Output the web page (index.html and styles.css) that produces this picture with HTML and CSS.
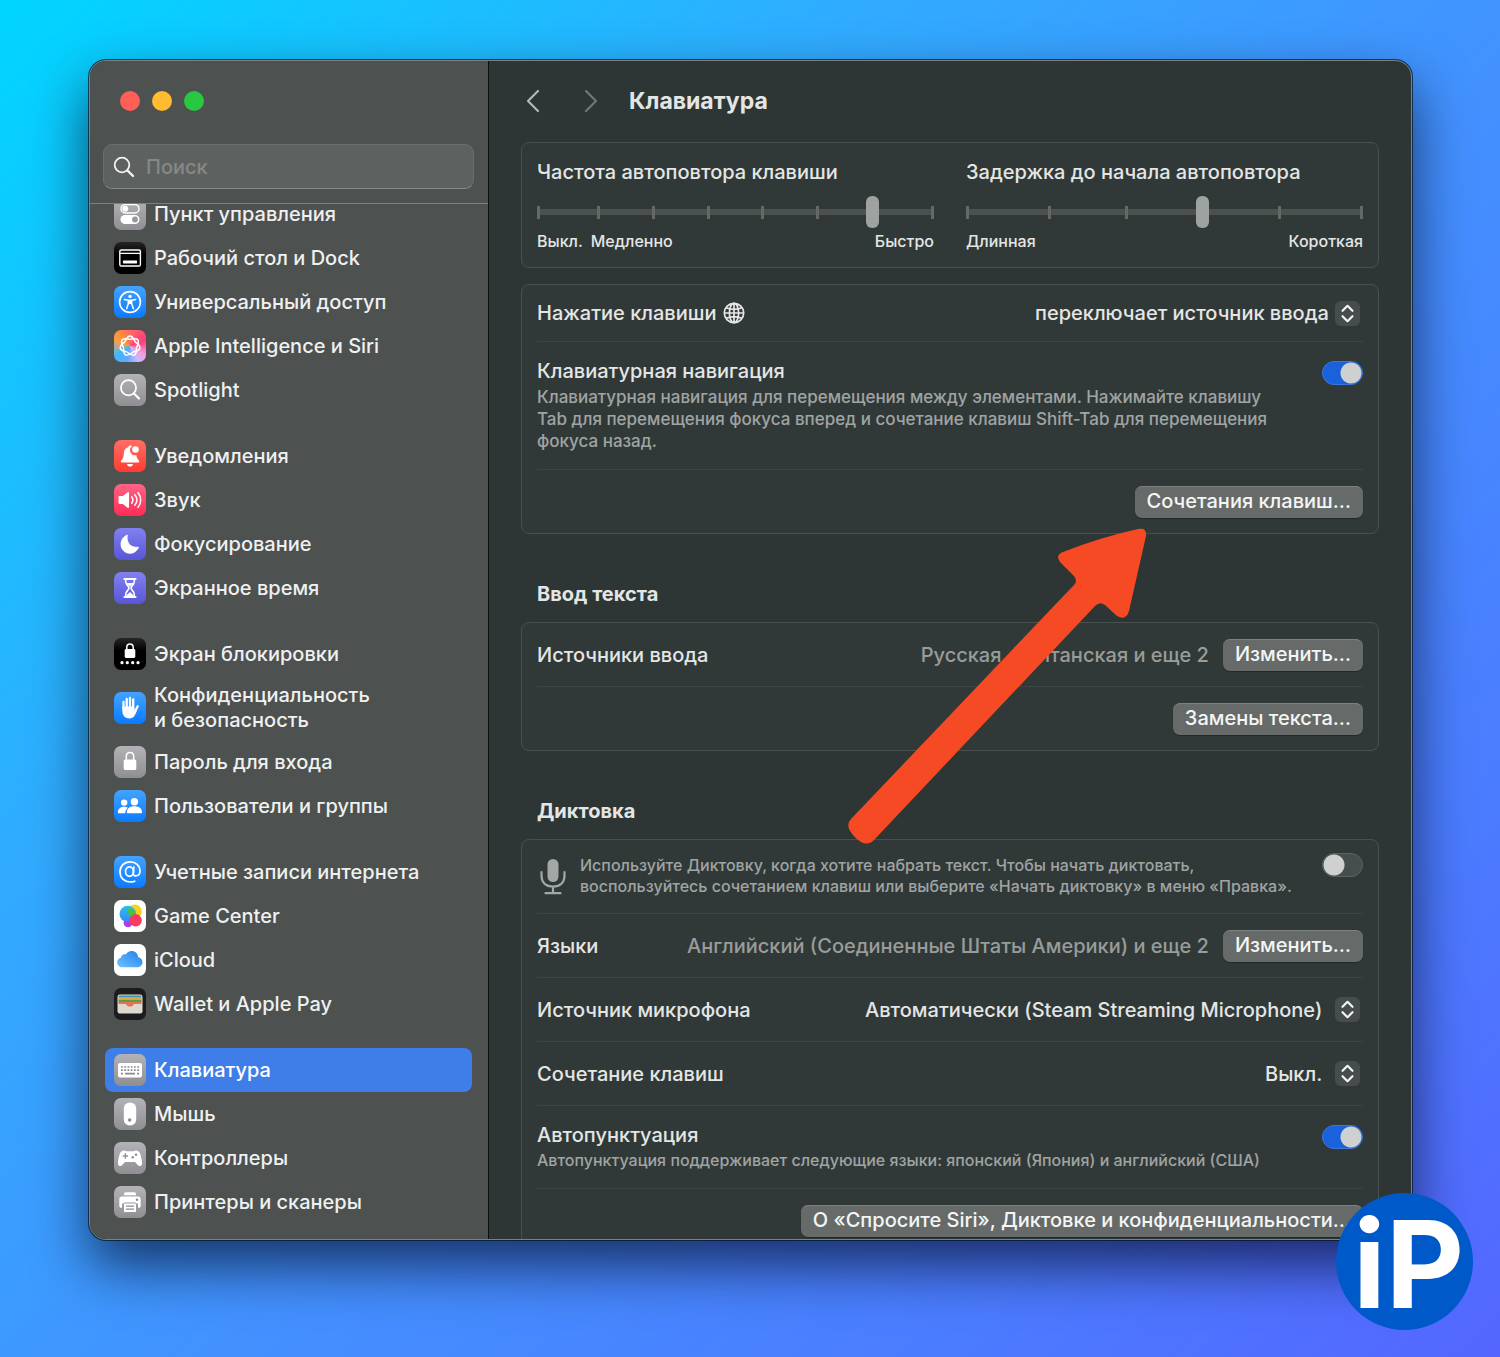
FILE: index.html
```html
<!DOCTYPE html>
<html lang="ru">
<head>
  <meta charset="UTF-8" />
  <meta name="viewport" content="width=device-width, initial-scale=1.0"/>
  <title>Клавиатура</title>
  <link rel="stylesheet" href="styles.css">
</head>
<body>
  <div class="window">
    <aside class="sidebar">
      <div class="lights">
        <button class="light red" aria-label="Закрыть"></button>
        <button class="light yellow" aria-label="Свернуть"></button>
        <button class="light green" aria-label="Развернуть"></button>
      </div>

      <label class="search">
        <svg width="22" height="22" viewBox="0 0 22 22" fill="none" stroke="#f2f3f3" stroke-linecap="round"><circle cx="9" cy="9" r="7.3" stroke-width="1.8"/><path d="M14.5 14.5 20 20" stroke-width="2.4"/></svg>
        <input type="search" placeholder="Поиск" aria-label="Поиск">
      </label>

      <nav class="list">
        <div class="list-inner">
          <div class="group">
            <a class="item" href="#">
              <svg class="icon gray" viewBox="0 0 32 32"><rect x="7" y="6.5" width="18" height="8.5" rx="4.25" fill="none" stroke="#fff" stroke-width="1.4"/><circle cx="11.3" cy="10.8" r="3" fill="#fff"/><rect x="6.5" y="17" width="19" height="9" rx="4.5" fill="#fff"/><circle cx="21" cy="21.5" r="2.9" fill="#98979c"/></svg>
              <span>Пункт управления</span>
            </a>
            <a class="item" href="#">
              <svg class="icon black" viewBox="0 0 32 32"><rect x="5.8" y="8" width="20.6" height="16" rx="1.6" fill="none" stroke="#fff" stroke-width="1.4"/><path d="M6 11.4h20" stroke="#fff" stroke-width="1.2"/><rect x="9" y="18.6" width="14" height="2.8" rx=".6" fill="#fff"/></svg>
              <span>Рабочий стол и Dock</span>
            </a>
            <a class="item" href="#">
              <svg class="icon blue" viewBox="0 0 32 32"><circle cx="16" cy="16" r="10.4" fill="none" stroke="#fff" stroke-width="1.6"/><circle cx="16" cy="10.4" r="1.7" fill="#fff"/><path d="M10.3 13.4l4 .9v3.4l-1.7 5.1M21.7 13.4l-4 .9v3.4l1.7 5.1M14.3 14.3h3.4M14.6 17.4 16 17l1.4.4" fill="none" stroke="#fff" stroke-width="1.5" stroke-linecap="round" stroke-linejoin="round"/><path d="M14 14h4v4h-4z" fill="#fff"/></svg>
              <span>Универсальный доступ</span>
            </a>
            <a class="item" href="#">
              <svg class="icon siri" viewBox="0 0 32 32">
                <defs><path id="petal" d="M-5.3-4.2C-4-5.9-3-10 0-10S4-5.9 5.3-4.2"/></defs>
                <g transform="translate(16 16)" fill="none" stroke="#fff" stroke-width="1.5">
                  <use href="#petal"/><use href="#petal" transform="rotate(51.43)"/><use href="#petal" transform="rotate(102.86)"/><use href="#petal" transform="rotate(154.29)"/><use href="#petal" transform="rotate(205.71)"/><use href="#petal" transform="rotate(257.14)"/><use href="#petal" transform="rotate(308.57)"/>
                </g>
              </svg>
              <span>Apple Intelligence и Siri</span>
            </a>
            <a class="item" href="#">
              <svg class="icon gray" viewBox="0 0 32 32"><circle cx="14.5" cy="13.8" r="7.6" fill="none" stroke="#fff" stroke-width="1.7"/><path d="M20 19.5l5 5" stroke="#fff" stroke-width="2.2" stroke-linecap="round"/></svg>
              <span>Spotlight</span>
            </a>
          </div>

          <div class="group">
            <a class="item" href="#">
              <svg class="icon red" viewBox="0 0 32 32"><path d="M16 5.5c-.9 0-1.5.6-1.5 1.5-3 .8-4.600 3.200-4.700 6.500-.1 4-1 5.300-2.600 6.900-.9 1-.4 2 .8 2h16c1.200 0 1.700-1 .8-2-1.300-1.300-2.200-2.500-2.500-5.300a5 5 0 0 1-4.300-8.800c-.2-.5-.8-.8-2-.8z" fill="#fff"/><circle cx="21.5" cy="9.5" r="3.3" fill="#fff"/><path d="M13 24h6c-.3 1.600-1.500 2.600-3 2.600s-2.700-1-3-2.600z" fill="#fff"/></svg>
              <span>Уведомления</span>
            </a>
            <a class="item" href="#">
              <svg class="icon pink" viewBox="0 0 32 32"><path d="M4.500 13.300c0-.7.500-1.200 1.200-1.200h3.200l4.700-3.900c.7-.5 1.400-.2 1.400.7v14.200c0 .9-.7 1.200-1.400.7l-4.700-3.900H5.700c-.7 0-1.200-.5-1.200-1.200z" fill="#fff"/><path d="M17.700 12.800c1.400 1.900 1.400 4.500 0 6.400M20.800 10.700c2.600 3.200 2.600 7.400 0 10.600M24 8.700c3.600 4.400 3.600 10.200 0 14.600" fill="none" stroke="#fff" stroke-width="1.5" stroke-linecap="round"/></svg>
              <span>Звук</span>
            </a>
            <a class="item" href="#">
              <svg class="icon indigo" viewBox="0 0 32 32"><path d="M13.400 7C12 13.500 15.500 20.200 24.600 19.200 23 23 19.800 25.300 16 25.300 10.900 25.300 7 21.400 7 16.400 7 12 9.400 8.500 13.400 7z" fill="#fff" stroke="#fff" stroke-width=".8" stroke-linejoin="round"/></svg>
              <span>Фокусирование</span>
            </a>
            <a class="item" href="#">
              <svg class="icon indigo" viewBox="0 0 32 32"><path d="M10.500 7h11M10.500 25h11" stroke="#fff" stroke-width="2.200" stroke-linecap="round"/><path d="M11.700 7v2.600c0 3 3.300 4.600 3.300 6.400s-3.300 3.400-3.300 6.400V25M20.300 7v2.600c0 3-3.300 4.600-3.300 6.400s3.300 3.400 3.300 6.400V25" fill="none" stroke="#fff" stroke-width="1.600"/><path d="M12.800 11h6.400c-.6 1.600-2.600 2.500-3.200 4-.6-1.500-2.600-2.400-3.200-4zM12.200 24.500c.2-1.800 2-2.600 3.800-4.500 1.800 1.900 3.600 2.700 3.800 4.500z" fill="#fff"/></svg>
              <span>Экранное время</span>
            </a>
          </div>

          <div class="group">
            <a class="item" href="#">
              <svg class="icon black" viewBox="0 0 32 32"><rect x="10.700" y="11" width="10.600" height="9" rx="1.400" fill="#fff"/><path d="M12.800 11.500V9.200c0-4.400 6.400-4.400 6.400 0v2.300" fill="none" stroke="#fff" stroke-width="1.500"/><g fill="#fff"><circle cx="8" cy="24.700" r="1.600"/><circle cx="13.300" cy="24.700" r="1.600"/><circle cx="18.700" cy="24.700" r="1.600"/><circle cx="24" cy="24.700" r="1.600"/></g></svg>
              <span>Экран блокировки</span>
            </a>
            <a class="item tall" href="#">
              <svg class="icon blue" viewBox="0 0 32 32"><g fill="none" stroke="#fff" stroke-width="2.300" stroke-linecap="round"><path d="M9.500 9.800v7M12.700 6.900v9M16 6v10M19.200 7.500v10M23.700 14.200l-2.800 5.500"/></g><path d="M8.350 14.500h12v4.300l2.300.2c-1.400 4.600-3.300 7.400-7.200 7.400-4.400 0-7.100-3-7.100-7.500z" fill="#fff"/></svg>
              <span>Конфиденциальность<br>и безопасность</span>
            </a>
            <a class="item" href="#">
              <svg class="icon gray" viewBox="0 0 32 32"><rect x="9.700" y="13.500" width="12.600" height="10.500" rx="1.600" fill="#fff"/><path d="M12.300 14v-3.500c0-5.200 7.400-5.200 7.400 0V14" fill="none" stroke="#fff" stroke-width="1.500"/></svg>
              <span>Пароль для входа</span>
            </a>
            <a class="item" href="#">
              <svg class="icon blue" viewBox="0 0 32 32" fill="#fff"><circle cx="10.200" cy="12.600" r="3.200"/><path d="M3.900 22.300c0-3.600 2.800-5.500 6.200-5.500 1.500 0 2.700.4 3.700 1-1.700 1.400-2.600 3.200-2.600 5.500H5c-.7 0-1.100-.3-1.100-1z"/><circle cx="20.400" cy="11.800" r="3.700"/><path d="M12.800 22.200c0-3.800 3.300-5.900 7.600-5.900s7.600 2.100 7.600 5.900c0 .7-.4 1.100-1.200 1.100H14c-.8 0-1.200-.4-1.200-1.100z"/></svg>
              <span>Пользователи и группы</span>
            </a>
          </div>

          <div class="group">
            <a class="item" href="#">
              <svg class="icon blue" viewBox="0 0 32 32" fill="none" stroke="#fff" stroke-width="1.700" stroke-linecap="round"><ellipse cx="15.500" cy="15.600" rx="4" ry="4.700"/><path d="M19.800 11l-.5 6.600c-.1 3.400 6.700 3.300 6.700-2.600 0-5.500-4.400-9.200-9.900-9.200C10.300 5.800 6 10 6 15.800 6 22 10.300 26 16.400 26c1.700 0 3.100-.3 4.300-.8"/></svg>
              <span>Учетные записи интернета</span>
            </a>
            <a class="item" href="#">
              <svg class="icon white" viewBox="0 0 32 32"><defs><linearGradient id="gcBlue" x1="0" y1="0" x2="0" y2="1"><stop offset="0" stop-color="#27c4e8"/><stop offset="1" stop-color="#3b82f6"/></linearGradient></defs><circle cx="14" cy="22.800" r="4.400" fill="#a63df0"/><circle cx="20.800" cy="11.400" r="7" fill="#f8d21c"/><circle cx="13.800" cy="14" r="8.300" fill="url(#gcBlue)"/><path d="M14.600 8.200a7 7 0 0 1 7.500 7c0 1-.2 2-.6 2.900a7 7 0 0 1-6.900-9.900z" fill="#4cc23a"/><circle cx="21.600" cy="20.300" r="6.200" fill="#fb3a64"/></svg>
              <span>Game Center</span>
            </a>
            <a class="item" href="#">
              <svg class="icon white" viewBox="0 0 32 32"><defs><linearGradient id="cloud" x1="0" y1="1" x2="1" y2="0"><stop offset="0" stop-color="#6fc4fb"/><stop offset="1" stop-color="#1f7df0"/></linearGradient></defs><path d="M8.500 23.300C5.500 23.300 3.200 21 3.200 18.400c0-2.500 1.700-4.300 3.800-4.700.2-2.500 2.700-4 4.900-3.200C13 8.300 15 7 17.500 7c3.700 0 6.500 2.700 6.700 6.300 2.500.3 4.300 2.400 4.300 5 0 2.800-2.300 5-5.200 5z" fill="url(#cloud)"/></svg>
              <span>iCloud</span>
            </a>
            <a class="item" href="#">
              <svg class="icon wallet" viewBox="0 0 32 32"><rect x="3.500" y="6.500" width="25" height="19" rx="2.200" fill="#ded9ce"/><path d="M4.500 9.500V8.700c0-.8.500-1.300 1.300-1.300h20.400c.8 0 1.300.5 1.300 1.300v.8z" fill="#3f8fb5"/><path d="M4.500 9.500h23v2.300h-23z" fill="#d9a93c"/><path d="M4.500 11.800h23v2.300h-23z" fill="#5c9c48"/><path d="M4.500 14.100h23v1.800H20c-.8 2-2.200 2.700-4 2.700s-3.200-.7-4-2.700H4.500z" fill="#e8705a"/></svg>
              <span>Wallet и Apple Pay</span>
            </a>
          </div>

          <div class="group">
            <a class="item active" href="#" aria-current="page">
              <svg class="icon gray" viewBox="0 0 32 32"><rect x="4" y="9" width="24" height="14.500" rx="2" fill="#fff"/><path d="M7 13h18M7 16.200h18" stroke="#8b8a8f" stroke-width="1.700" stroke-dasharray="1.800 1.440"/><path d="M7 19.700h2M11 19.700h10M23 19.700h2" stroke="#8b8a8f" stroke-width="1.700"/></svg>
              <span>Клавиатура</span>
            </a>
            <a class="item" href="#">
              <svg class="icon gray" viewBox="0 0 32 32"><rect x="9.800" y="4.500" width="12.400" height="23" rx="6" fill="#fff"/><circle cx="15.700" cy="22" r="1.700" fill="#8b8a8f"/></svg>
              <span>Мышь</span>
            </a>
            <a class="item" href="#">
              <svg class="icon gray" viewBox="0 0 32 32"><path d="M9.500 8.500c1.300-.1 1.700.7 3 .7h7c1.300 0 1.700-.8 3-.7 2.300.2 3.400 2 4.200 4.700.8 2.800 1.500 6.300 1.300 8.600-.2 2.500-2.700 3-4.300 1.200L21 20H11l-2.700 3c-1.600 1.800-4.100 1.300-4.300-1.200-.2-2.300.5-5.800 1.300-8.600.8-2.700 1.900-4.500 4.200-4.700z" fill="#fff"/><path d="M11.400 11.300v5.400M8.700 14h5.400" stroke="#929196" stroke-width="1.500"/><circle cx="18.800" cy="15.300" r="1.300" fill="#929196"/><circle cx="22" cy="12.700" r="1.300" fill="#929196"/></svg>
              <span>Контроллеры</span>
            </a>
            <a class="item" href="#">
              <svg class="icon gray" viewBox="0 0 32 32"><path d="M10 9.300V8c0-1 .7-1.700 1.700-1.700h8.600c1 0 1.700.7 1.700 1.700v1.300z" fill="#fff"/><path d="M8 10.600h16c1.700 0 2.700 1 2.700 2.700v6.200c0 1.500-.8 2.300-2.300 2.300H24v-4.300H8v4.300h-.4c-1.500 0-2.300-.8-2.300-2.300v-6.200c0-1.700 1-2.700 2.700-2.700z" fill="#fff"/><circle cx="23" cy="13.800" r="1.200" fill="#8b8a8f"/><rect x="9.500" y="17" width="13" height="9.500" rx="1.300" fill="#fff" stroke="#98979c" stroke-width="1"/><path d="M12 20.200h8M12 23.200h8" stroke="#8b8a8f" stroke-width="1.300"/></svg>
              <span>Принтеры и сканеры</span>
            </a>
          </div>
        </div>
      </nav>
    </aside>

    <main class="content">
      <header class="toolbar">
        <button class="nav-btn" aria-label="Назад"><svg width="14" height="24" viewBox="0 0 14 24"><path d="M12 2 2 12l10 10"/></svg></button>
        <button class="nav-btn dim" aria-label="Вперед" disabled><svg width="14" height="24" viewBox="0 0 14 24"><path d="M2 2l10 10L2 22"/></svg></button>
        <h1>Клавиатура</h1>
      </header>

      <section class="card sliders">
        <div class="field">
          <label for="rate">Частота автоповтора клавиши</label>
          <div class="slider">
            <div class="ticks seven"><i></i><i></i><i></i><i></i><i></i><i></i></div>
            <input type="range" id="rate" min="0" max="7" value="6">
          </div>
          <div class="captions"><span>Выкл.</span><span>Медленно</span><span class="end">Быстро</span></div>
        </div>
        <div class="field">
          <label for="delay">Задержка до начала автоповтора</label>
          <div class="slider">
            <div class="ticks five"><i></i><i></i><i></i><i></i></div>
            <input type="range" id="delay" min="0" max="5" value="3">
          </div>
          <div class="captions"><span>Длинная</span><span class="end">Короткая</span></div>
        </div>
      </section>

      <section class="card">
        <div class="row short">
          <label class="with-globe" for="globe">Нажатие клавиши
            <svg width="22" height="22" viewBox="0 0 22 22" fill="none" stroke="#e6e8e7" stroke-width="1.700"><circle cx="11" cy="11" r="9.700"/><ellipse cx="11" cy="11" rx="4.600" ry="9.700"/><path d="M11 1v20M1 11h20M3.200 5.800c4.600 1.900 11 1.900 15.600 0M3.200 16.200c4.600-1.900 11-1.900 15.600 0"/></svg>
          </label>
          <span class="popup">
            <select id="globe"><option>переключает источник ввода</option></select>
            <svg width="25" height="25" viewBox="0 0 25 25"><path d="M7.500 9.800l5-5 5 5M7.500 15.200l5 5 5-5"/></svg>
          </span>
        </div>
        <div class="row text-row">
          <div class="text">
            <label for="keynav">Клавиатурная навигация</label>
            <p class="note">Клавиатурная навигация для перемещения между элементами. Нажимайте клавишу Tab для перемещения фокуса вперед и сочетание клавиш Shift-Tab для перемещения фокуса назад.</p>
          </div>
          <input type="checkbox" class="switch" id="keynav" checked>
        </div>
        <div class="row">
          <button class="btn">Сочетания клавиш…</button>
        </div>
      </section>

      <h2>Ввод текста</h2>
      <section class="card">
        <div class="row">
          <span class="name">Источники ввода</span>
          <span class="value">Русская, Британская и еще 2</span>
          <button class="btn">Изменить…</button>
        </div>
        <div class="row">
          <button class="btn">Замены текста…</button>
        </div>
      </section>

      <h2>Диктовка</h2>
      <section class="card">
        <div class="row dictation">
          <svg class="mic" width="26" height="36" viewBox="0 0 26 36"><rect x="7.500" y="0" width="11" height="23" rx="5.500" fill="#a3a7a6"/><path d="M1.500 13v3.500c0 7 4.500 11 11.500 11s11.500-4 11.500-11V13M13 27.500V34M5.500 34.200h15" fill="none" stroke="#a3a7a6" stroke-width="2.200" stroke-linecap="round"/></svg>
          <label class="note small" for="dictation">Используйте Диктовку, когда хотите набрать текст. Чтобы начать диктовать, воспользуйтесь сочетанием клавиш или выберите «Начать диктовку» в меню «Правка».</label>
          <input type="checkbox" class="switch" id="dictation">
        </div>
        <div class="row">
          <span class="name">Языки</span>
          <span class="value">Английский (Соединенные Штаты Америки) и еще 2</span>
          <button class="btn">Изменить…</button>
        </div>
        <div class="row">
          <label for="mic">Источник микрофона</label>
          <span class="popup wide">
            <select id="mic"><option>Автоматически (Steam Streaming Microphone)</option></select>
            <svg width="25" height="25" viewBox="0 0 25 25"><path d="M7.500 9.800l5-5 5 5M7.500 15.200l5 5 5-5"/></svg>
          </span>
        </div>
        <div class="row">
          <label for="shortcut">Сочетание клавиш</label>
          <span class="popup wide">
            <select id="shortcut"><option>Выкл.</option></select>
            <svg width="25" height="25" viewBox="0 0 25 25"><path d="M7.500 9.800l5-5 5 5M7.500 15.200l5 5 5-5"/></svg>
          </span>
        </div>
        <div class="row text-row">
          <div class="text">
            <label for="autopunct">Автопунктуация</label>
            <p class="note small">Автопунктуация поддерживает следующие языки: японский (Япония) и английский (США)</p>
          </div>
          <input type="checkbox" class="switch" id="autopunct" checked>
        </div>
        <div class="row">
          <button class="btn">О «Спросите Siri», Диктовке и конфиденциальности…</button>
        </div>
      </section>
    </main>
  </div>

  <svg class="arrow" width="300" height="318" viewBox="0 0 300 318"><path d="M290 1Q299-1 298 8L281 83Q278 93 269 88L257 77Q252 73 247 78L26 312Q20 318 13 314Q5 309 1 301Q-1 295 3 291L226 57Q230 53 226 48L212 34Q207 27 215 24Q250 10 290 1Z" fill="#f64a24"/></svg>
  <div class="logo">iP</div>
</body>
</html>
```
FILE: styles.css
```css
* {
  box-sizing: border-box;
}
body {
  position: relative;
  margin: 0;
  min-height: 100vh;
  padding: 60px 88px 117px 89px;
  font-family: Inter, "Liberation Sans", sans-serif;
  font-size: 20px;
  font-weight: 500;
  line-height: 24px;
  color: #e4e6e5;
  background: linear-gradient(135deg, #00d6ff 0%, #30acff 30%, #4391ff 55%, #4b7cff 80%, #5466ff 100%);
}
button,
input,
select {
  font: inherit;
  color: inherit;
  margin: 0;
}
.window {
  display: flex;
  height: calc(100vh - 177px);
  overflow: hidden;
  border: 1px solid #7b8180;
  border-radius: 17px;
  background: #2e3635;
  box-shadow: 0 0 0 1px rgba(0, 20, 40, 0.7), 0 26px 56px rgba(0, 0, 20, 0.65);
}

/* sidebar */
.sidebar {
  display: flex;
  flex-direction: column;
  flex: 0 0 399px;
  background: #4d5150;
  border-right: 1px solid #0c0f0f;
}
.lights {
  display: flex;
  gap: 12px;
  padding: 30px 30px 0;
}
.light {
  width: 20px;
  height: 20px;
  padding: 0;
  border: 0;
  border-radius: 50%;
}
.light.red {
  background: #ff5f57;
}
.light.yellow {
  background: #febc2e;
}
.light.green {
  background: #28c840;
}
.search {
  display: flex;
  align-items: center;
  gap: 11px;
  height: 45px;
  margin: 33px 14px 14px 13px;
  padding: 0 9px;
  border: 1px solid #6a6f6e;
  border-bottom-color: #868a89;
  border-radius: 9px;
  background: #5d6261;
}
.search input {
  flex: 1;
  min-width: 0;
  padding: 0;
  border: 0;
  outline: 0;
  background: none;
}
.search input::placeholder {
  color: #858988;
}
.list {
  flex: 1;
  overflow: hidden;
  padding: 0 16px 0 15px;
  border-top: 1px solid #7c807f;
}
/* list is scrolled down a little */
.list-inner {
  margin-top: -12px;
}
.group {
  margin-bottom: 22px;
}
.item {
  display: flex;
  align-items: center;
  gap: 8px;
  height: 44px;
  padding: 0 9px;
  border-radius: 8px;
  color: #eff0f0;
  text-decoration: none;
}
.item.tall {
  height: 64px;
  line-height: 25px;
}
.item.active {
  background: #3f7ee8;
  color: #fff;
}
.icon {
  flex: none;
  width: 32px;
  height: 32px;
  border-radius: 7px;
}
.icon.gray {
  background: linear-gradient(#b3b2b7, #8f8e93);
}
.icon.black {
  background: linear-gradient(#262626, #000 40%);
}
.icon.blue {
  background: linear-gradient(#43a3ff, #0a7aff);
}
.icon.red {
  background: linear-gradient(#ff6f64, #ff3b30);
}
.icon.pink {
  background: linear-gradient(#ff6486, #ff2d55);
}
.icon.indigo {
  background: linear-gradient(#8280f0, #5856d6);
}
.icon.white {
  background: #fff;
}
.icon.wallet {
  background: #1c1c1e;
}
.icon.siri {
  background: conic-gradient(from 0deg, #ff6a6a, #ff3d78 70deg, #f79ad8 120deg, #c9b8ff 150deg, #62a8ff 190deg, #3fb8ff 235deg, #f7a04a 290deg, #ff8a3c 325deg, #ff6a6a);
}

/* content */
.content {
  flex: 1;
  min-width: 0;
  padding: 0 32px;
}
.toolbar {
  display: flex;
  align-items: center;
  height: 81px;
  padding: 0 0 2px 5px;
}
.nav-btn {
  display: flex;
  margin-right: 44px;
  padding: 0;
  border: 0;
  background: none;
}
.nav-btn svg {
  fill: none;
  stroke: #b4b7b6;
  stroke-width: 2.2;
  stroke-linecap: round;
  stroke-linejoin: round;
}
.nav-btn.dim {
  margin-right: 31px;
}
.nav-btn.dim svg {
  stroke: #727776;
}
h1 {
  margin: 0;
  font-size: 23px;
  font-weight: 700;
  line-height: 30px;
}
h2 {
  margin: 48px 16px 16px;
  font-size: 20px;
  font-weight: 700;
}
.card {
  padding: 0 15px;
  border: 1px solid #4a504f;
  border-radius: 8px;
  background: #313938;
}
.card + .card {
  margin-top: 16px;
}
.sliders {
  display: grid;
  grid-template-columns: 1fr 1fr;
  gap: 32px;
  padding-top: 17px;
  padding-bottom: 15px;
}
.field label {
  display: block;
}
.slider {
  display: grid;
  align-items: center;
  margin: 12px 0 2px;
}
.slider > * {
  grid-area: 1 / 1;
}
.ticks {
  display: flex;
  justify-content: space-between;
  height: 13px;
  border: solid #646968;
  border-width: 0 3px;
  background: linear-gradient(#4c5150, #4c5150) center / 100% 6px no-repeat;
}
.ticks.seven {
  padding: 0 57px;
}
.ticks.five {
  padding: 0 79px;
}
.ticks i {
  width: 3px;
  background: #646968;
}
.slider input {
  width: 100%;
  height: 32px;
  appearance: none;
  background: none;
}
.slider input::-webkit-slider-thumb {
  appearance: none;
  width: 13px;
  height: 32px;
  border-radius: 6px;
  background: #9ea2a1;
}
.captions {
  display: flex;
  gap: 8px;
  font-size: 16px;
  line-height: 22px;
}
.captions .end {
  margin-left: auto;
}
.row {
  display: flex;
  align-items: center;
  justify-content: flex-end;
  height: 64px;
  border-bottom: 1px solid #3d4443;
}
.row:last-child {
  height: 63px;
  border-bottom: 0;
}
.row.short {
  height: 57px;
}
.row > label,
.row > .name {
  margin-right: auto;
}
.row.text-row {
  align-items: flex-start;
  height: auto;
  padding: 17px 0;
}
.text {
  flex: 1;
  padding-right: 32px;
}
.note {
  margin: 3px 0 0;
  font-size: 17px;
  line-height: 22px;
  color: #a0a4a3;
}
.note.small {
  font-size: 16px;
  line-height: 21px;
}
.row.dictation {
  align-items: flex-start;
  height: 74px;
  padding-top: 11px;
}
.dictation .note {
  flex: 1;
  margin: 4px 24px 0 14px;
}
.mic {
  margin: 8px 0 0 3px;
}
.value {
  margin-right: 14px;
  color: #989c9b;
}
.btn {
  height: 32px;
  padding: 0 12px 2px;
  border: 0;
  border-top: 1px solid #7d8180;
  border-radius: 7px;
  background: #666b6a;
  color: #f4f5f5;
  box-shadow: 0 1px 1px rgba(0, 0, 0, 0.3);
}
.with-globe {
  display: flex;
  align-items: center;
  gap: 7px;
}
.popup {
  display: flex;
  align-items: center;
  gap: 6px;
  padding-right: 3px;
}
.popup.wide {
  gap: 12px;
}
.popup select {
  padding: 0;
  border: 0;
  appearance: none;
  background: none;
}
.popup svg {
  border-radius: 6px;
  background: #474d4c;
  fill: none;
  stroke: #f2f3f3;
  stroke-width: 2.2;
  stroke-linecap: round;
  stroke-linejoin: round;
}
.switch {
  flex: none;
  width: 41px;
  height: 24px;
  margin-top: 2px;
  appearance: none;
  border: 1px solid #5d6362;
  border-radius: 12px;
  background: radial-gradient(circle at 11px 11px, #cfd1d0 10px, transparent 11px) #474d4c;
}
.switch:checked {
  border-color: #3a76dd;
  background: radial-gradient(circle at 28px 11px, #cfd1d0 10px, transparent 11px) #1a62db;
}

/* overlays */
.arrow {
  position: absolute;
  top: 528px;
  left: 848px;
  pointer-events: none;
}
.logo {
  position: absolute;
  right: 27px;
  bottom: 27px;
  width: 137px;
  height: 137px;
  padding-left: 8px;
  border-radius: 50%;
  background: #0059c9;
  color: #fff;
  font-size: 121px;
  font-weight: 700;
  line-height: 143px;
  text-align: center;
}
```
